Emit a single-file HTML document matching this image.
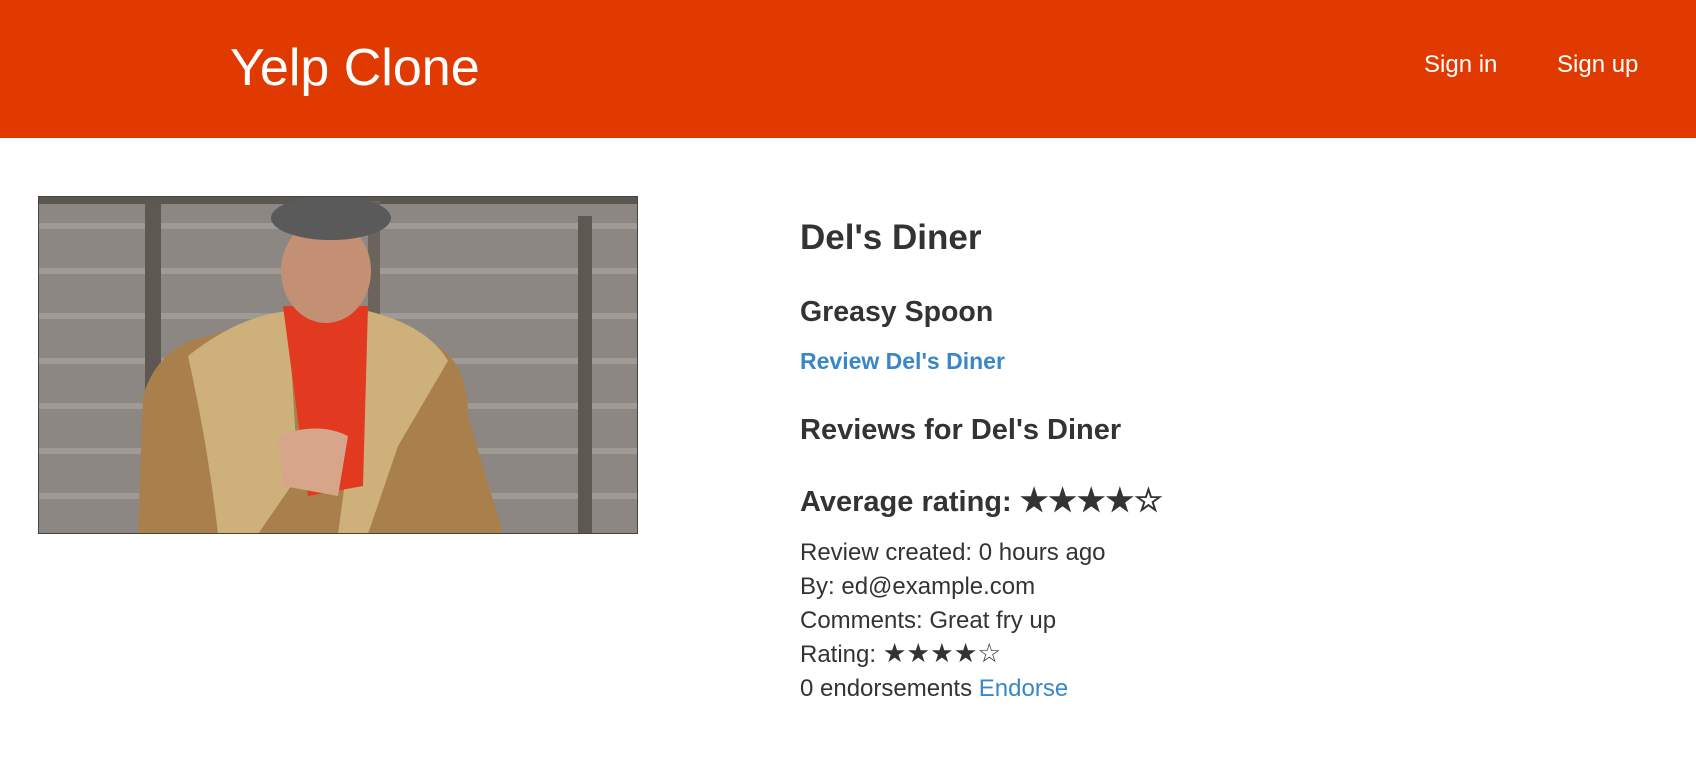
<!DOCTYPE html>
<html><head><meta charset="utf-8"><style>
*{margin:0;padding:0;box-sizing:border-box}
body{width:1696px;height:784px;background:#fff;font-family:"Liberation Sans",Arial,sans-serif;color:#333;position:relative;overflow:hidden}
.hdr{position:absolute;left:0;top:0;width:1696px;height:138px;background:#e03a00}
.t{position:absolute;white-space:nowrap;line-height:1}
.w{color:#fff}
.b{color:#3a87c8}
.st{font-size:1.1em;line-height:0}
</style></head><body>
<div class="hdr"></div>
<div class="t w" style="left:230px;top:42px;font-size:52px">Yelp Clone</div>
<div class="t w" style="left:1424px;top:53px;font-size:24px">Sign in</div>
<div class="t w" style="left:1557px;top:53px;font-size:24px">Sign up</div>
<svg style="position:absolute;left:38px;top:196px" width="600" height="338" viewBox="0 0 600 338">
<rect width="600" height="338" fill="#8c8782"/>
<g stroke="#a8a39d" stroke-width="6" opacity=".7">
<line x1="0" y1="30" x2="600" y2="30"/><line x1="0" y1="75" x2="600" y2="75"/><line x1="0" y1="120" x2="600" y2="120"/><line x1="0" y1="165" x2="600" y2="165"/><line x1="0" y1="210" x2="600" y2="210"/><line x1="0" y1="255" x2="600" y2="255"/><line x1="0" y1="300" x2="600" y2="300"/></g>
<rect x="0" y="0" width="600" height="8" fill="#5a5650"/>
<rect x="107" y="5" width="16" height="333" fill="#5e5852"/>
<rect x="540" y="20" width="14" height="318" fill="#5e5852"/>
<rect x="330" y="5" width="12" height="120" fill="#6a645d"/>
<path d="M100 338 L105 200 Q120 150 170 140 L240 120 L330 120 L400 150 Q430 170 430 220 L465 338 Z" fill="#a97f4c"/>
<path d="M150 160 Q200 120 250 115 L260 280 L220 338 L180 338 Q170 250 150 160Z" fill="#cdb07a"/>
<path d="M330 115 Q390 130 410 165 L360 250 L330 338 L300 338 Z" fill="#cdb07a"/>
<path d="M245 110 L330 110 L325 290 L270 300 Z" fill="#e13a20"/>
<ellipse cx="288" cy="75" rx="45" ry="52" fill="#c49074"/>
<ellipse cx="293" cy="22" rx="60" ry="22" fill="#5a5a5a"/>
<path d="M240 240 Q280 225 310 240 L300 300 L245 290 Z" fill="#d6a58a"/>
</svg>
<div style="position:absolute;left:38px;top:196px;width:600px;height:338px;border:1px solid #444"></div>
<div class="t" style="left:800px;top:220px;font-size:35px;font-weight:bold">Del's Diner</div>
<div class="t" style="left:800px;top:298px;font-size:28.5px;font-weight:bold">Greasy Spoon</div>
<div class="t b" style="left:800px;top:350px;font-size:23px;font-weight:bold">Review Del's Diner</div>
<div class="t" style="left:800px;top:416px;font-size:29px;font-weight:bold">Reviews for Del's Diner</div>
<div class="t" style="left:800px;top:488px;font-size:29px;font-weight:bold">Average rating: <span class="st">★★★★☆</span></div>
<div class="t" style="left:800px;top:541px;font-size:24px">Review created: 0 hours ago</div>
<div class="t" style="left:800px;top:575px;font-size:24px">By: ed@example.com</div>
<div class="t" style="left:800px;top:609px;font-size:24px">Comments: Great fry up</div>
<div class="t" style="left:800px;top:643px;font-size:24px">Rating: <span class="st">★★★★☆</span></div>
<div class="t" style="left:800px;top:677px;font-size:24px">0 endorsements <span class="b">Endorse</span></div>
</body></html>
